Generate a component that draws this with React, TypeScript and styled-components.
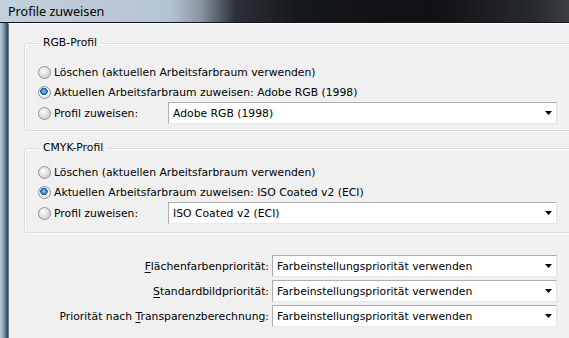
import React from "react"
import styled, { createGlobalStyle } from "styled-components"

const GlobalStyle = createGlobalStyle`
  html, body {
    margin: 0;
    padding: 0;
    overflow: hidden;
    background: #f0f0f0;
  }
`

const uiFont = `"DejaVu Sans", "Liberation Sans", sans-serif`

const Window = styled.div`
  width: 569px;
  height: 338px;
  display: flex;
  flex-direction: column;
  overflow: hidden;
  font-family: ${uiFont};
  font-size: 10.8px;
  color: #000;
`

const TitleBar = styled.div`
  height: 23px;
  flex-shrink: 0;
  display: flex;
  align-items: center;
  padding-left: 8px;
  box-sizing: border-box;
  border-bottom: 1px solid #101418;
  background: linear-gradient(
    to right,
    #c3d0dd 0px,
    #b4c3d2 170px,
    #8996a3 200px,
    #2c3137 235px,
    #14171b 300px,
    #0f1114 430px,
    #25282d 530px,
    #3b3e43 569px
  );
  font-family: "Noto Sans", "Open Sans", sans-serif;
  font-size: 12.6px;
`

const Frame = styled.div`
  flex: 1;
  display: flex;
  min-width: 0;
`

const FrameEdge = styled.div`
  width: 8px;
  flex-shrink: 0;
  background: linear-gradient(
    to right,
    #b9c7d5 0px,
    #a3b5c7 2px,
    #7d95ad 4px,
    #52687f 6px,
    #2e3f52 8px
  );
`

const Content = styled.div`
  flex: 1;
  min-width: 0;
  overflow: hidden;
  background: #f0f0f0;
  border-top: 1px solid #ffffff;
  border-left: 1px solid #6f7d8b;
  padding: 12px 0 0 15px;
  display: flex;
  flex-direction: column;
`

const GroupBox = styled.fieldset<{ $top: number; $bottom: number; $gap: number }>`
  margin: ${(p) => p.$gap}px -12px 0 0;
  padding: ${(p) => p.$top}px 23px ${(p) => p.$bottom}px 13px;
  border: 1px solid #d5dfe5;
  border-radius: 3px;
  box-shadow: inset 1px 1px 0 #ffffff, 1px 1px 0 #ffffff;
  display: flex;
  flex-direction: column;
  min-width: 0;
`

const Legend = styled.legend`
  padding: 0 4px;
  margin-left: 1px;
  line-height: 14px;
`

const RadioRow = styled.label`
  height: 19.5px;
  display: flex;
  align-items: center;
  white-space: nowrap;
`

const SelectRow = styled.div`
  height: 22px;
  display: flex;
  align-items: center;
  white-space: nowrap;
`

const Radio = styled.span<{ $checked?: boolean }>`
  width: 11px;
  height: 11px;
  flex-shrink: 0;
  border-radius: 50%;
  border: 1px solid #8f9396;
  margin-right: 3px;
  background: ${(p) =>
    p.$checked
      ? "radial-gradient(circle at 45% 40%, #a6d4f7 0, #3c8bd6 2px, #1a5aa0 3.5px, #f4f4f4 4px, #dcdcdc 100%)"
      : "radial-gradient(circle at 40% 35%, #ffffff 0, #f1f1f1 2px, #d9d9d9 5.5px, #cfcfcf 100%)"};
`

const InlineLabel = styled.span`
  width: 114px;
  flex-shrink: 0;
`

const Select = styled.div`
  flex: 1;
  min-width: 0;
  height: 22px;
  box-sizing: border-box;
  display: flex;
  align-items: center;
  justify-content: space-between;
  padding: 0 4px 0 4px;
  background: #ffffff;
  border: 1px solid;
  border-color: #abadb3 #e2e3ea #e3e9ef #abadb3;
  white-space: nowrap;
`

const Arrow = () => (
  <svg width="7" height="4" viewBox="0 0 7 4" style={{ flexShrink: 0 }}>
    <path d="M0 0H7L3.5 4Z" fill="#000" />
  </svg>
)

const PriorityGrid = styled.div`
  margin: 22px 12px 0 0;
  display: grid;
  grid-template-columns: 245px 1fr;
  column-gap: 3px;
  row-gap: 3px;
  align-items: center;
`

const FieldLabel = styled.span`
  text-align: right;
  white-space: nowrap;
`

const Key = styled.u`
  text-decoration-thickness: 1px;
  text-underline-offset: 2px;
`

interface IProfileProps {
  title: string
  current: string
  top: number
  bottom: number
  gap: number
}

const ProfileGroup: React.FC<IProfileProps> = ({ title, current, top, bottom, gap }) => (
  <GroupBox $top={top} $bottom={bottom} $gap={gap}>
    <Legend>{title}</Legend>
    <RadioRow>
      <Radio />
      Löschen (aktuellen Arbeitsfarbraum verwenden)
    </RadioRow>
    <RadioRow>
      <Radio $checked />
      Aktuellen Arbeitsfarbraum zuweisen: {current}
    </RadioRow>
    <SelectRow>
      <Radio />
      <InlineLabel>Profil zuweisen:</InlineLabel>
      <Select>
        {current}
        <Arrow />
      </Select>
    </SelectRow>
  </GroupBox>
)

const PRIORITY = "Farbeinstellungspriorität verwenden"

export default function App() {
  return (
    <>
      <GlobalStyle />
      <Window>
        <TitleBar>Profile zuweisen</TitleBar>
        <Frame>
          <FrameEdge />
          <Content>
            <ProfileGroup title="RGB-Profil" current="Adobe RGB (1998)" top={13} bottom={6} gap={0} />
            <ProfileGroup title="CMYK-Profil" current="ISO Coated v2 (ECI)" top={8} bottom={8} gap={10} />
            <PriorityGrid>
              <FieldLabel>
                <Key>F</Key>lächenfarbenpriorität:
              </FieldLabel>
              <Select>
                {PRIORITY}
                <Arrow />
              </Select>
              <FieldLabel>
                <Key>S</Key>tandardbildpriorität:
              </FieldLabel>
              <Select>
                {PRIORITY}
                <Arrow />
              </Select>
              <FieldLabel>
                Priorität nach <Key>T</Key>ransparenzberechnung:
              </FieldLabel>
              <Select>
                {PRIORITY}
                <Arrow />
              </Select>
            </PriorityGrid>
          </Content>
        </Frame>
      </Window>
    </>
  )
}
